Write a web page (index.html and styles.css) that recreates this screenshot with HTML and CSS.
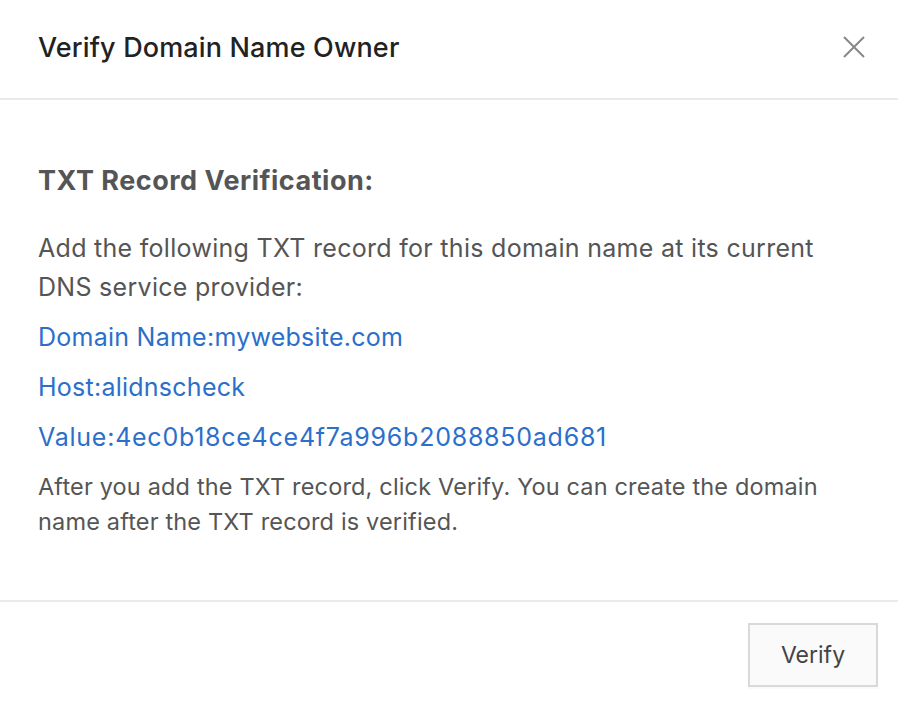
FILE: index.html
```html
<!DOCTYPE html>
<html>
<head>
<meta charset="utf-8">
<link rel="stylesheet" href="styles.css">
</head>
<body>
<div class="dialog">
  <header class="dlg-header">
    <h1 class="dlg-title">Verify Domain Name Owner</h1>
    <button class="dlg-close" aria-label="Close">
      <svg width="22" height="22" viewBox="0 0 22 22"><path d="M1 1L21 21M21 1L1 21" stroke="#888" stroke-width="2" fill="none"/></svg>
    </button>
  </header>
  <main class="dlg-body">
    <h2 class="section-title">TXT Record Verification:</h2>
    <p class="intro">Add the following TXT record for this domain name at its current DNS service provider:</p>
    <p class="rec">Domain Name:mywebsite.com</p>
    <p class="rec">Host:alidnscheck</p>
    <p class="rec rec-value">Value:4ec0b18ce4ce4f7a996b2088850ad681</p>
    <p class="note">After you add the TXT record, click Verify. You can create the domain name after the TXT record is verified.</p>
  </main>
  <footer class="dlg-footer">
    <button class="btn">Verify</button>
  </footer>
</div>
</body>
</html>
```
FILE: styles.css
```css
html, body {
  margin: 0;
  padding: 0;
  background: #fff;
}
body {
  font-family: Inter, "Liberation Sans", sans-serif;
  width: 898px;
  height: 702px;
  overflow: hidden;
}
.dialog {
  display: flex;
  flex-direction: column;
}
.dlg-header {
  height: 100px;
  border-bottom: 2px solid #e8eaed;
  box-sizing: border-box;
  display: flex;
  align-items: center;
  justify-content: space-between;
  padding: 0 33px 4px 38px;
}
.dlg-title {
  margin: 0;
  font-size: 27px;
  font-weight: 500;
  color: #222;
  letter-spacing: 0.15px;
}
.dlg-close {
  border: 0;
  background: none;
  padding: 0;
  width: 22px;
  height: 22px;
  display: flex;
  cursor: pointer;
}
.dlg-body {
  height: 502px;
  box-sizing: border-box;
  padding: 66px 38px 0 38px;
  border-bottom: 2px solid #e8eaed;
}
.section-title {
  margin: 0 0 33px 0;
  font-size: 27px;
  font-weight: 700;
  color: #555;
  line-height: 30px;
  letter-spacing: 0.5px;
}
.intro {
  margin: 0;
  font-size: 25px;
  line-height: 39px;
  color: #555;
  letter-spacing: 0.29px;
}
.rec {
  margin: 10px 0 0 0;
  font-size: 25px;
  line-height: 40px;
  color: #2b6fca;
  letter-spacing: 0.25px;
}
.rec-value {
  letter-spacing: 0.75px;
}
.note {
  margin: 12px 0 0 0;
  font-size: 23.5px;
  line-height: 35px;
  color: #555;
  letter-spacing: 0.16px;
}
.dlg-footer {
  display: flex;
  justify-content: flex-end;
  padding: 21px 20px 0 0;
}
.btn {
  width: 130px;
  height: 64px;
  border: 2px solid #d9d9d9;
  background: #fafafa;
  font-family: Inter, "Liberation Sans", sans-serif;
  font-size: 23px;
  color: #444;
  box-sizing: border-box;
  box-shadow: 0 2px 0 rgba(0,0,0,0.02);
}
```
